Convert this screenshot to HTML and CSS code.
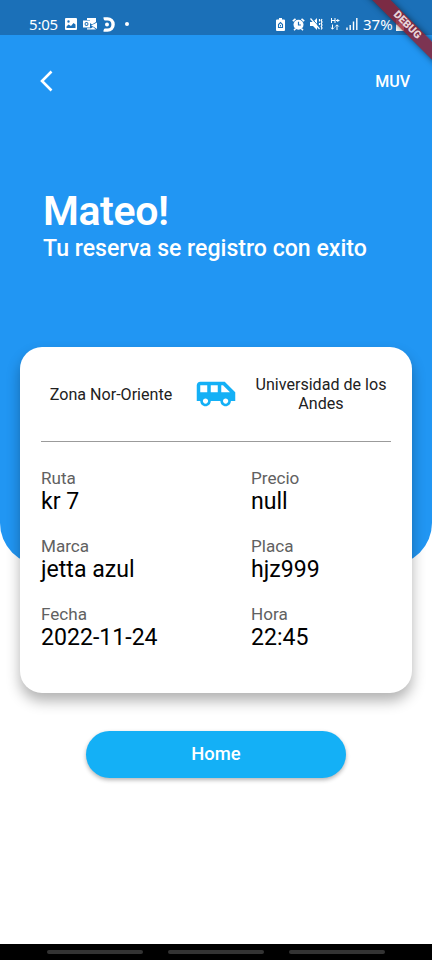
FILE: index.html
```html
<!DOCTYPE html>
<html lang="es">
<head>
    <meta charset="UTF-8">
    <meta name="viewport" content="width=device-width, initial-scale=1.0">
    <title>MUV - Reserva</title>
    <link rel="stylesheet" href="styles.css">
</head>
<body>

    <!-- Barra de estado -->
    <div class="status-bar">
        <div class="status-left">
            <span class="status-time">5:05</span>
            <svg class="icon-image" width="12" height="12" viewBox="0 0 12 12">
                <path fill="#fff" fill-rule="evenodd" d="M1 0h10a1 1 0 0 1 1 1v10a1 1 0 0 1-1 1H1a1 1 0 0 1-1-1V1a1 1 0 0 1 1-1zM1.5 10h9V6.5L8.5 5 6 8 3.5 6.5l-2 2zM3.5 2.3a1.2 1.2 0 1 0 0 2.4 1.2 1.2 0 0 0 0-2.4z"/>
            </svg>
            <svg class="icon-mail" width="14" height="12" viewBox="0 0 14 12">
                <path fill="#fff" d="M4 0h9v4l-4 2.5L7 5V2H4z"/>
                <path fill="#fff" fill-rule="evenodd" d="M0 2.5h7v7H0zM3.5 4a2 2 0 1 0 0 4 2 2 0 0 0 0-4z"/>
                <circle cx="3.5" cy="6" r="1" fill="#fff"/>
                <path fill="#fff" d="M8 7.5 14 4.5V11L11 9zM4 10.3h4L10 9l3 2.5H4z"/>
            </svg>
            <svg class="icon-didi" width="13" height="15" viewBox="0 0 13 15">
                <path d="M1.500 1.900h4a5.600 5.600 0 0 1 0 11.200h-4" fill="none" stroke="#fff" stroke-width="3.400"/>
                <path d="M0 0l3.500 5H0zM0 15l3.500-5H0z" fill="#1b70b8"/>
                <circle cx="5" cy="7.500" r="2" fill="#fff"/>
            </svg>
            <span class="status-dot"></span>
        </div>
        <div class="status-right">
            <svg class="icon-saver" width="9" height="13" viewBox="0 0 9 13">
                <path fill="#fff" d="M3 0h3v1.500h2a1 1 0 0 1 1 1V12a1 1 0 0 1-1 1H1a1 1 0 0 1-1-1V2.500a1 1 0 0 1 1-1h2z"/>
                <path d="M2.500 9.500V6.500l2-2 2 2v3z" fill="none" stroke="#1b70b8" stroke-width="1.100"/>
                <path d="M4.500 7v1.500" stroke="#1b70b8"/>
            </svg>
            <svg class="icon-alarm" width="13" height="13" viewBox="0 0 13 13">
                <circle cx="6.500" cy="6.800" r="5" fill="#fff"/>
                <path d="M.8 3.200 3.500.8M12.200 3.200 9.500.8M2 12.300l1.500-1.500M11 12.300 9.500 10.800" stroke="#fff" stroke-width="1.600"/>
                <path d="M6.500 3.800v3.200h2.400" fill="none" stroke="#1b70b8" stroke-width="1.200"/>
            </svg>
            <svg class="icon-mute" width="13" height="12" viewBox="0 0 13 12">
                <path d="M0 4h3l4-4v12L3 8H0z" fill="#fff"/>
                <path d="M1.500 0l9 10.500" stroke="#1b70b8" stroke-width="1"/>
                <path d="M.5.500l9 10.500" stroke="#fff" stroke-width="1.200"/>
                <path d="M9.500 1v2.500M9.500 5v2M12 1l-.8 1.500.8 1.500-.8 1.500.8 1.500-.8 1.500.8 1.500-.8 1.500" stroke="#fff" stroke-width="1.200" fill="none"/>
            </svg>
            <svg class="icon-data" width="10" height="12" viewBox="0 0 10 12">
                <path d="M1.500 0v5M5 0v5M1.500 2.500H5M6 2.500h3.500M7.800 1v3M2.500 6.500v4.500M.8 9.500l1.700 1.700 1.700-1.700M7 12V7M5.300 8.500 7 6.800l1.700 1.700" stroke="#fff" stroke-width="1" fill="none"/>
            </svg>
            <svg class="icon-signal" width="12" height="12" viewBox="0 0 12 12">
                <path d="M1 12V9.500M4.200 12V7M7.500 12V3.500M10.800 12V0" stroke="#fff" stroke-width="1.400"/>
            </svg>
            <span class="status-battery">37%</span>
            <svg class="icon-battery" width="8" height="13" viewBox="0 0 8 13">
                <path fill="#fff" fill-opacity=".5" d="M2.500 0h3v1H8v6H0V1h2.500z"/>
                <path fill="#fff" d="M0 7l3-1 1-4 2 5h2v6H0z"/>
            </svg>
        </div>
    </div>
    <div class="debug-clip"><div class="debug-banner">DEBUG</div></div>

    <!-- Encabezado -->
    <header class="header">
        <nav class="nav">
            <svg class="back" width="14" height="22" viewBox="0 0 14 22">
                <path d="M11.500 1.500 2 11l9.500 9.500" fill="none" stroke="#fff" stroke-width="2.600"/>
            </svg>
            <span class="brand">MUV</span>
        </nav>
        <h1 class="name">Mateo!</h1>
        <p class="message">Tu reserva se registro con exito</p>
    </header>

    <!-- Tarjeta de la reserva -->
    <main class="card">
        <div class="trip">
            <div class="place">Zona Nor-Oriente</div>
            <svg class="van" width="42" height="42" viewBox="0 0 24 24">
                <path fill="#14b0f6" d="M17 5H3c-1.100 0-2 .89-2 2v9h2c0 1.650 1.340 3 3 3s3-1.350 3-3h5.500c0 1.650 1.340 3 3 3s3-1.350 3-3H23v-5l-6-6zM3 11V7h4v4H3zm3 6.500c-.83 0-1.500-.67-1.500-1.500s.67-1.500 1.500-1.500 1.500.67 1.500 1.500-.67 1.500-1.500 1.500zm7-6.500H9V7h4v4zm4.500 6.500c-.83 0-1.500-.67-1.500-1.500s.67-1.500 1.500-1.500 1.500.67 1.500 1.500-.67 1.500-1.500 1.500zM15 11V7h1l4 4h-5z"/>
            </svg>
            <div class="place">Universidad de los Andes</div>
        </div>

        <div class="details">
            <div class="detail">
                <div class="label">Ruta</div>
                <div class="value">kr 7</div>
            </div>
            <div class="detail">
                <div class="label">Precio</div>
                <div class="value">null</div>
            </div>
            <div class="detail">
                <div class="label">Marca</div>
                <div class="value">jetta azul</div>
            </div>
            <div class="detail">
                <div class="label">Placa</div>
                <div class="value">hjz999</div>
            </div>
            <div class="detail">
                <div class="label">Fecha</div>
                <div class="value">2022-11-24</div>
            </div>
            <div class="detail">
                <div class="label">Hora</div>
                <div class="value">22:45</div>
            </div>
        </div>
    </main>

    <button class="home-button">Home</button>

    <!-- Barra de navegación del sistema -->
    <div class="system-nav">
        <span></span>
        <span></span>
        <span></span>
    </div>

</body>
</html>
```
FILE: styles.css
```css
* {
    box-sizing: border-box;
}

body {
    font-family: Roboto, sans-serif;
    margin: 0;
    height: 960px;
    display: flex;
    flex-direction: column;
    background: #fff;
    position: relative;
    overflow: hidden;
}

/* Barra de estado */
.status-bar {
    height: 35px;
    flex: none;
    padding: 12px 28px 0 29px;
    display: flex;
    justify-content: space-between;
    align-items: flex-start;
    background: #1b70b8;
    color: #fff;
}

.status-left,
.status-right {
    display: flex;
    align-items: center;
    height: 24px;
}

.status-time,
.status-battery {
    font-family: "Noto Sans", sans-serif;
    font-size: 15px;
    line-height: 24px;
}

.status-time {
    width: 30px;
    letter-spacing: -0.2px;
}

.icon-image {
    margin-left: 6px;
}

.icon-mail {
    margin-left: 6px;
}

.icon-didi {
    margin-left: 5px;
}

.status-dot {
    width: 4px;
    height: 4px;
    margin-left: 10px;
    border-radius: 50%;
    background: #fff;
}

.icon-alarm {
    margin-left: 7px;
}

.icon-mute {
    margin-left: 5px;
}

.icon-data {
    margin-left: 7px;
}

.icon-signal {
    margin-left: 6px;
}

.status-battery {
    width: 31px;
    margin-left: 5px;
}

.icon-battery {
    margin-left: 2px;
}

/* Cinta diagonal sobre la esquina */
.debug-clip {
    position: absolute;
    top: 0;
    right: 0;
    width: 80px;
    height: 80px;
    overflow: hidden;
}

.debug-banner {
    position: absolute;
    top: 19px;
    left: -5px;
    width: 120px;
    height: 12.6px;
    transform: rotate(45deg);
    background: rgba(150, 24, 36, 0.78);
    box-shadow: 0 0 6px rgba(0, 0, 0, 0.5);
    color: #e8d5da;
    font-size: 10.7px;
    font-weight: 900;
    line-height: 12.6px;
    text-align: center;
}

/* Encabezado azul */
.header {
    height: 530px;
    flex: none;
    padding: 30px 22px 0 40px;
    background: #2196f3;
    border-radius: 0 0 42px 42px;
    color: #fff;
}

.nav {
    display: flex;
    justify-content: space-between;
    align-items: center;
    height: 32px;
}

.brand {
    font-size: 16px;
    font-weight: 500;
}

.name {
    margin: 90px 0 0 3px;
    font-size: 41px;
    font-weight: 600;
    line-height: 49px;
    letter-spacing: -0.4px;
}

.message {
    margin: -1px 0 0 3px;
    font-size: 23.1px;
    font-weight: 500;
    line-height: 27px;
}

/* Tarjeta */
.card {
    height: 346px;
    flex: none;
    margin: -218px 20px 0;
    padding: 0 21px;
    background: #fff;
    border-radius: 22px;
    box-shadow: 0 8px 14px rgba(0, 0, 0, 0.3);
}

.trip {
    display: grid;
    grid-template-columns: 140px 70px 140px;
    align-items: center;
    justify-items: center;
    height: 95px;
    border-bottom: 1px solid #9b9b9b;
}

.place {
    font-size: 16.1px;
    line-height: 19px;
    text-align: center;
    color: #212121;
}

.details {
    display: grid;
    grid-template-columns: 210px 140px;
    row-gap: 21px;
    padding-top: 26px;
}

.label {
    font-size: 17.1px;
    line-height: 20px;
    color: #616161;
}

.value {
    font-size: 23.1px;
    line-height: 27px;
    color: #000;
}

/* Botón */
.home-button {
    flex: none;
    width: 260px;
    height: 47px;
    margin: 38px auto 0;
    padding: 0 0 2px;
    border: none;
    border-radius: 24px;
    background: #14b0f6;
    box-shadow: 0 2px 4px rgba(0, 0, 0, 0.3);
    color: #fff;
    font-family: Roboto, sans-serif;
    font-size: 18.4px;
    font-weight: 500;
}

/* Barra de navegación del sistema */
.system-nav {
    display: flex;
    justify-content: center;
    gap: 25px;
    height: 16px;
    margin-top: auto;
    padding-top: 6px;
    background: #000;
}

.system-nav span {
    width: 96px;
    height: 4px;
    border-radius: 2px;
    background: #333;
}
```
